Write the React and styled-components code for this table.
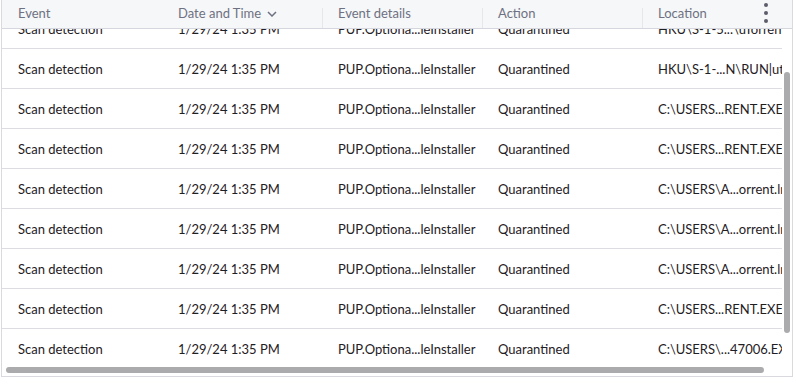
import React, { useLayoutEffect, useRef } from 'react';
import styled, { createGlobalStyle } from 'styled-components';

const GlobalStyle = createGlobalStyle`
  html, body {
    margin: 0;
    padding: 0;
    background: #ffffff;
  }
  body {
    font-family: Lato, "Liberation Sans", sans-serif;
  }
`;

const COL_WIDTH = 160;

const Panel = styled.div`
  position: relative;
  margin-left: 1px;
  width: 792px;
  height: 377px;
  box-sizing: border-box;
  border: 1px solid #d9d9df;
  border-top: none;
  background: #ffffff;
  display: flex;
  flex-direction: column;
  overflow: hidden;
`;

const HeaderBar = styled.div`
  flex: 0 0 auto;
  height: 28px;
  display: flex;
  background: #f6f7f9;
  border-bottom: 1px solid #d6d6de;
  overflow: hidden;
`;

const HeaderCell = styled.div`
  position: relative;
  flex: 0 0 ${COL_WIDTH}px;
  box-sizing: border-box;
  padding: 0 16px 2px;
  display: flex;
  align-items: center;
  gap: 6px;
  font-size: 13px;
  color: #6e7182;
  white-space: nowrap;

  &::before {
    content: '';
    display: ${p => (p.$divider ? 'block' : 'none')};
    position: absolute;
    left: 0;
    top: 8px;
    bottom: 0;
    width: 1px;
    background: #e6e7ec;
  }
`;

const SortIcon = styled.svg`
  width: 10px;
  height: 6px;
  margin-top: 1px;
`;

const MenuButton = styled.button`
  position: absolute;
  top: 0;
  right: 20px;
  width: 12px;
  height: 26px;
  border: none;
  background: transparent;
  display: flex;
  flex-direction: column;
  align-items: center;
  justify-content: flex-start;
  padding: 3px 0 0;
  gap: 4px;
  cursor: pointer;
`;

const Dot = styled.span`
  width: 4px;
  height: 4px;
  border-radius: 50%;
  background: #5b5d68;
`;

const Body = styled.div`
  flex: 1 1 auto;
  margin: 0 10px 10px 0;
  overflow: hidden;
`;

const Thumb = styled.div`
  position: absolute;
  background: #ababae;
  border-radius: 3px;
  ${p =>
    p.$vertical
      ? 'right: 2px; top: 72px; width: 6px; height: 261px;'
      : 'left: 4px; bottom: 3px; height: 6px; width: 758px;'}
`;

const Row = styled.div`
  display: flex;
  width: ${COL_WIDTH * 5}px;
  height: 40px;
  box-sizing: border-box;
  border-bottom: 1px solid #dcdce3;
`;

const Cell = styled.div`
  flex: 0 0 ${COL_WIDTH}px;
  box-sizing: border-box;
  padding: 0 16px;
  display: flex;
  align-items: center;
  font-size: 13px;
  color: #1f2024;
  white-space: nowrap;
  overflow: hidden;
`;

const columns = [
  { key: 'event', label: 'Event' },
  { key: 'date', label: 'Date and Time', sorted: true },
  { key: 'details', label: 'Event details', divider: true },
  { key: 'action', label: 'Action', divider: true },
  { key: 'location', label: 'Location', divider: true },
];

const locations = [
  'HKU\\S-1-5...\\uTorrent',
  'HKU\\S-1-5...\\uTorrent',
  'HKU\\S-1-...N\\RUN|utorrent',
  'C:\\USERS...RENT.EXE',
  'C:\\USERS...RENT.EXE',
  'C:\\USERS\\A...orrent.lnk',
  'C:\\USERS\\A...orrent.lnk',
  'C:\\USERS\\A...orrent.lnk',
  'C:\\USERS...RENT.EXE',
  'C:\\USERS\\...47006.EXE',
  'C:\\USERS\\...47006.EXE',
];

const rows = locations.map((location, i) => ({
  id: i,
  event: 'Scan detection',
  date: '1/29/24 1:35 PM',
  details: 'PUP.Optiona...leInstaller',
  action: 'Quarantined',
  location,
}));

function App() {
  const bodyRef = useRef(null);

  useLayoutEffect(() => {
    if (bodyRef.current) {
      bodyRef.current.scrollTop = 60;
    }
  }, []);

  return (
    <>
      <GlobalStyle />
      <Panel>
        <HeaderBar>
          {columns.map(col => (
            <HeaderCell key={col.key} $divider={col.divider}>
              {col.label}
              {col.sorted && (
                <SortIcon viewBox="0 0 10 6">
                  <polyline points="1,1 5,5 9,1" fill="none" stroke="#6e7182" strokeWidth="1.5" />
                </SortIcon>
              )}
            </HeaderCell>
          ))}
        </HeaderBar>
        <MenuButton aria-label="Column options">
          <Dot />
          <Dot />
          <Dot />
        </MenuButton>
        <Body ref={bodyRef}>
          {rows.map(row => (
            <Row key={row.id}>
              {columns.map(col => (
                <Cell key={col.key}>{row[col.key]}</Cell>
              ))}
            </Row>
          ))}
        </Body>
        <Thumb $vertical />
        <Thumb />
      </Panel>
    </>
  );
}

export default App;
